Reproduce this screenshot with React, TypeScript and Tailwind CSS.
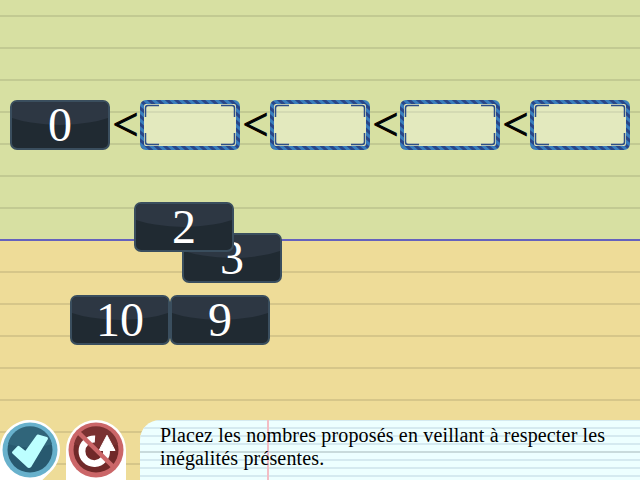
import React from "react";

function Tile({ value }: { value: string }) {
  return (
    <div className="relative h-[50px] w-[100px] shrink-0 rounded-[7px] border-2 border-[#3a4e5e] bg-[#202a32]">
      <div className="absolute inset-0 overflow-hidden rounded-[5px]">
        <div className="absolute -left-[28px] -top-[40px] h-[63px] w-[152px] rounded-[50%] bg-[#2d3743]" />
      </div>
      <div className="relative -mt-[4px] text-center text-[48px] leading-[54px] text-white">{value}</div>
    </div>
  );
}

function Slot() {
  return (
    <svg width="100" height="50" viewBox="0 0 100 50" className="block shrink-0">
      <defs>
        <pattern id="stripes" width="9" height="8" patternUnits="userSpaceOnUse">
          <rect width="9" height="8" fill="#3a7ebd" />
          <path d="M-4.5 -4L13.5 12M-4.5 4L4.5 12M4.5 -4L13.5 4" stroke="#294688" strokeWidth="3" />
        </pattern>
      </defs>
      <rect x="2" y="2" width="96" height="46" rx="4" fill="#fff" fillOpacity="0.3" />
      <rect x="2" y="2" width="96" height="46" rx="4" fill="none" stroke="url(#stripes)" strokeWidth="4" />
      <path
        d="M5.5 17V8Q5.5 5.5 8 5.5H19M81 5.5H92Q94.5 5.5 94.5 8V17M94.5 33V42Q94.5 44.5 92 44.5H81M19 44.5H8Q5.5 44.5 5.5 42V33"
        fill="none"
        stroke="#2c4d88"
        strokeWidth="1.5"
      />
    </svg>
  );
}

function Less() {
  return (
    <span className="block w-[30px] shrink-0 pl-px text-center text-[46px] leading-[50px] text-black [-webkit-text-stroke:1px_black]">
      &lt;
    </span>
  );
}

function CheckButton() {
  return (
    <svg width="60" height="60" viewBox="0 0 60 60" className="block">
      <path d="M0 30A30 30 0 1 1 51.2 51.2L42.4 60H0Z" fill="#fff" />
      <circle cx="30" cy="30" r="27.5" fill="#68b1cc" />
      <circle cx="30" cy="30" r="22.5" fill="#28596f" />
      <path d="M8 24A22.5 22.5 0 0 1 52 24Q31 31 8 24Z" fill="#30657a" />
      <path
        d="M13.5 32.5L18.5 27.3L25.6 33L37.8 16L46.5 18.5L30 46Q29 47 28 46Z"
        fill="#bcffff"
        stroke="#bcffff"
        strokeWidth="3"
        strokeLinejoin="round"
      />
    </svg>
  );
}

function ResetButton() {
  return (
    <svg width="60" height="60" viewBox="0 0 60 60" className="block">
      <path d="M0 60V30A30 30 0 0 1 60 30V60Z" fill="#fff" />
      <circle cx="30" cy="30" r="27.5" fill="#cb6668" />
      <circle cx="30" cy="30" r="22.5" fill="#702929" />
      <path d="M8 24A22.5 22.5 0 0 1 52 24Q31 31 8 24Z" fill="#7a3131" />
      <path d="M29 19A12.3 12.3 0 1 0 40.5 30" fill="none" stroke="#fff" strokeWidth="6.8" />
      <path d="M41 15.3L49 30.5H33Z" fill="#fff" stroke="#fff" strokeLinejoin="round" />
      <path d="M13 13L47 46.5" stroke="#cb6668" strokeWidth="4.5" />
    </svg>
  );
}

export default function App() {
  return (
    <main className="flex h-[480px] w-[640px] flex-col overflow-hidden font-['Liberation_Serif',serif]">
      <section className="h-[239px] shrink-0 bg-[#d7e0a2] bg-[repeating-linear-gradient(to_bottom,transparent_0px,transparent_15px,#c2ca92_15px,#c2ca92_17px,transparent_17px,transparent_32px)] pt-[100px]">
        <div className="flex px-[10px]">
          <Tile value="0" />
          <Less />
          <Slot />
          <Less />
          <Slot />
          <Less />
          <Slot />
          <Less />
          <Slot />
        </div>
      </section>
      <section className="relative flex flex-1 flex-col justify-end border-t-2 border-[#6562bd] bg-[#eedc98] bg-[repeating-linear-gradient(to_bottom,transparent_0px,transparent_30px,#d6c689_30px,#d6c689_32px)]">
        <div className="absolute left-[182px] top-[-8px]">
          <Tile value="3" />
        </div>
        <div className="absolute left-[134px] top-[-39px]">
          <Tile value="2" />
        </div>
        <div className="absolute left-[70px] top-[54px] flex">
          <Tile value="10" />
          <Tile value="9" />
        </div>
        <footer className="flex h-[60px]">
          <CheckButton />
          <div className="ml-[6px]">
            <ResetButton />
          </div>
          <div className="relative ml-[14px] h-[60px] w-[500px] overflow-hidden rounded-tl-[20px] bg-[#edffff]">
            <div className="absolute inset-0 bg-[repeating-linear-gradient(to_bottom,#d5eaf0_0px,#d5eaf0_1px,transparent_1px,transparent_7px,#d5eaf0_7px,#d5eaf0_8px)]" />
            <div className="absolute left-0 top-[31px] h-[2px] w-full bg-[#c9dbdc]" />
            <div className="absolute left-[127px] top-0 h-full w-[2px] bg-[#f3bdc4]" />
            <p className="relative pl-5 pt-1 text-[20px] leading-[23px] tracking-[0.16px] text-black">
              Placez les nombres proposés en veillant à respecter les
              <br />
              inégalités présentes.
            </p>
          </div>
        </footer>
      </section>
    </main>
  );
}
